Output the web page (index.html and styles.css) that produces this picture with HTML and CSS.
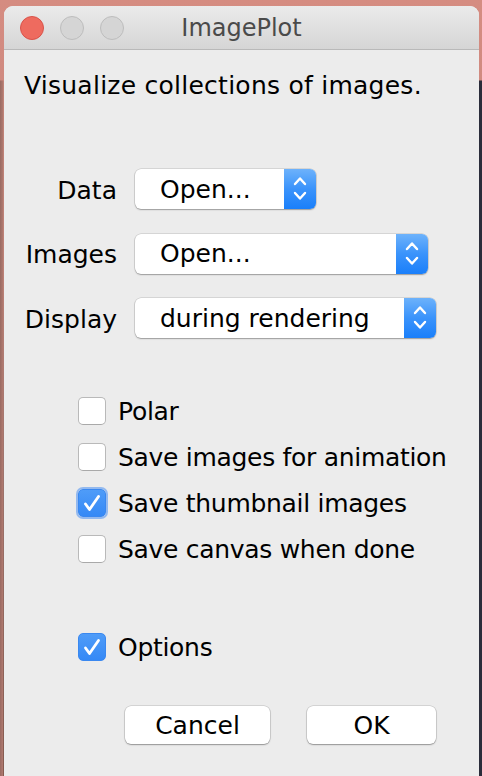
FILE: index.html
```html
<!DOCTYPE html>
<html>
<head>
<meta charset="utf-8">
<link rel="stylesheet" href="styles.css">
</head>
<body>
<div class="desk">
  <div class="window">
    <div class="titlebar">
      <div class="lights">
        <span class="light red"></span>
        <span class="light"></span>
        <span class="light"></span>
      </div>
      <div class="title">ImagePlot</div>
      <div></div>
    </div>
    <div class="content">
      <p class="intro">Visualize collections of images.</p>
      <div class="form">
        <div class="lbl">Data</div>
        <div class="popup w-data"><span class="ptext">Open...</span><span class="parrow"><svg width="32" height="40" viewBox="0 0 32 40"><path d="M11 15 L16 9.5 L21 15 M11 24 L16 29.5 L21 24" fill="none" stroke="#fff" stroke-width="2.4" stroke-linecap="round" stroke-linejoin="round"/></svg></span></div>
        <div class="lbl">Images</div>
        <div class="popup w-images"><span class="ptext">Open...</span><span class="parrow"><svg width="32" height="40" viewBox="0 0 32 40"><path d="M11 15 L16 9.5 L21 15 M11 24 L16 29.5 L21 24" fill="none" stroke="#fff" stroke-width="2.4" stroke-linecap="round" stroke-linejoin="round"/></svg></span></div>
        <div class="lbl">Display</div>
        <div class="popup w-display"><span class="ptext">during rendering</span><span class="parrow"><svg width="32" height="40" viewBox="0 0 32 40"><path d="M11 15 L16 9.5 L21 15 M11 24 L16 29.5 L21 24" fill="none" stroke="#fff" stroke-width="2.4" stroke-linecap="round" stroke-linejoin="round"/></svg></span></div>
      </div>
      <div class="checks">
        <div class="check"><span class="box"></span><span>Polar</span></div>
        <div class="check"><span class="box"></span><span>Save images for animation</span></div>
        <div class="check"><span class="box on focus"><svg width="28" height="28" viewBox="0 0 28 28"><path d="M7.5 15 L11.5 20.5 L20.5 7.5" fill="none" stroke="#fff" stroke-width="2.8" stroke-linecap="round" stroke-linejoin="round"/></svg></span><span>Save thumbnail images</span></div>
        <div class="check"><span class="box"></span><span>Save canvas when done</span></div>
      </div>
      <div class="check options"><span class="box on"><svg width="28" height="28" viewBox="0 0 28 28"><path d="M7.5 15 L11.5 20.5 L20.5 7.5" fill="none" stroke="#fff" stroke-width="2.8" stroke-linecap="round" stroke-linejoin="round"/></svg></span><span>Options</span></div>
      <div class="buttons">
        <button class="btn cancel">Cancel</button>
        <button class="btn ok">OK</button>
      </div>
    </div>
  </div>
</div>
</body>
</html>
```

FILE: styles.css
```css
html, body {
  margin: 0;
  height: 776px;
  overflow: hidden;
}
body {
  background: linear-gradient(90deg, #9a6a62 0px, #b07a70 3px, transparent 4px, transparent 478px, #2a2c3a 479px),
              linear-gradient(180deg, #d58c81 0%, #c9877d 35%, #8d6e6a 60%, #5a3a2e 100%);
  font-family: "DejaVu Sans", "Noto Sans", sans-serif;
  color: #000;
}
.desk {
  padding: 6px 3px 0 4px;
  background: linear-gradient(180deg, #d58c81 0px, #d08a80 80px, transparent 81px);
}
.window {
  background: #ececec;
  border-radius: 9px 9px 0 0;
  height: 770px;
  overflow: hidden;
}
.titlebar {
  height: 43px;
  border-bottom: 1px solid #b9b9b9;
  background: linear-gradient(180deg, #ebebeb 0%, #d5d5d5 100%);
  display: grid;
  grid-template-columns: 1fr auto 1fr;
  align-items: center;
}
.lights {
  display: flex;
  gap: 16px;
  padding-left: 16px;
  padding-top: 1px;
}
.light {
  width: 22px;
  height: 22px;
  border-radius: 50%;
  background: #d5d5d5;
  border: 1px solid #bdbdbd;
}
.light.red {
  background: #ee6b5f;
  border-color: #d9534a;
}
.title {
  font-size: 24px;
  color: #4a4a4a;
  padding-top: 1px;
}
.content {
  padding: 0 20px;
}
.intro {
  margin: 0;
  padding-top: 22px;
  font-size: 25px;
  line-height: 28px;
  letter-spacing: 0.25px;
}
.form {
  margin-top: 69px;
  display: grid;
  grid-template-columns: 93px auto;
  column-gap: 18px;
  row-gap: 24.5px;
  align-items: center;
  justify-items: start;
}
.lbl {
  justify-self: end;
  font-size: 25px;
  padding-top: 2px;
}
.popup {
  height: 40px;
  box-sizing: border-box;
  background: #fff;
  border-radius: 6px;
  box-shadow: 0 0 0 0.5px rgba(0,0,0,0.18), 0 1px 1.5px rgba(0,0,0,0.28);
  display: flex;
  align-items: center;
  justify-content: space-between;
  overflow: hidden;
}
.w-data { width: 181px; }
.w-images { width: 293px; }
.w-display { width: 301px; }
.ptext {
  padding-left: 25px;
  font-size: 25px;
}
.parrow {
  width: 32px;
  height: 40px;
  background: linear-gradient(180deg, #6db2fb 0%, #3a93fb 50%, #1a7ffa 100%);
  display: block;
}
.parrow svg { display: block; }
.checks {
  margin-top: 59px;
  padding-left: 54px;
  display: flex;
  flex-direction: column;
  gap: 18px;
}
.check {
  display: flex;
  align-items: center;
  gap: 12px;
  font-size: 25px;
  letter-spacing: -0.3px;
  height: 28px;
}
.box {
  width: 28px;
  height: 28px;
  box-sizing: border-box;
  flex: none;
  background: #fff;
  border: 1px solid #b9b9b9;
  border-bottom-color: #a9a9a9;
  border-radius: 5px;
}
.box.on {
  background: linear-gradient(180deg, #4f9cf8 0%, #3589f6 100%);
  border-color: #3a88f0;
}
.box.on svg { display: block; margin: -1px; }
.box.focus {
  box-shadow: 0 0 0 2px rgba(118, 168, 240, 0.75);
}
.options {
  margin-top: 70px;
  padding-left: 54px;
}
.buttons {
  margin-top: 45px;
  display: flex;
  justify-content: flex-end;
  gap: 37px;
  padding-right: 23px;
}
.btn {
  height: 38px;
  background: #fff;
  border: none;
  border-radius: 6px;
  box-shadow: 0 0 0 0.5px rgba(0,0,0,0.2), 0 1px 1.5px rgba(0,0,0,0.3);
  font-family: "DejaVu Sans", "Noto Sans", sans-serif;
  font-size: 25px;
  color: #000;
  padding: 0;
}
.cancel { width: 145px; }
.ok { width: 129px; }
```
